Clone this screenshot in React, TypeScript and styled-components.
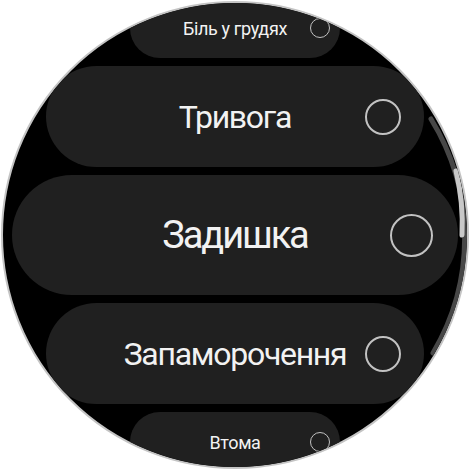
import React from "react";
import styled, { createGlobalStyle } from "styled-components";

type Size = "sm" | "md" | "lg";

const sizes: Record<
    Size,
    {
        width: number;
        height: number;
        font: number;
        tracking: number;
        radio: number;
        ring: number;
        pad: number;
    }
> = {
    sm: { width: 210, height: 60, font: 18, tracking: -0.02, radio: 20, ring: 1.5, pad: 10 },
    md: { width: 378, height: 101, font: 32, tracking: -0.04, radio: 36, ring: 2, pad: 23 },
    lg: { width: 446, height: 120, font: 38, tracking: -0.055, radio: 43, ring: 2, pad: 25 },
};

const symptoms: { label: string; size: Size }[] = [
    { label: "Біль у грудях", size: "sm" },
    { label: "Тривога", size: "md" },
    { label: "Задишка", size: "lg" },
    { label: "Запаморочення", size: "md" },
    { label: "Втома", size: "sm" },
];

export default function App() {
    return (
        <>
            <GlobalStyle />
            <Face>
                {symptoms.map((item) => (
                    <Pill key={item.label} size={item.size}>
                        <Label size={item.size}>{item.label}</Label>
                        <Radio size={item.size} />
                    </Pill>
                ))}
                <ScrollIndicator viewBox="0 0 466 466" width={466} height={466}>
                    {/* track and thumb follow the bezel edge */}
                    <path
                        d="M 428 116 A 226 226 0 0 1 430 350"
                        stroke="#474747"
                        strokeWidth={5}
                        strokeLinecap="round"
                        fill="none"
                    />
                    <path
                        d="M 453 168 A 226 226 0 0 1 459 232"
                        stroke="#c8c8c8"
                        strokeWidth={5}
                        strokeLinecap="round"
                        fill="none"
                    />
                </ScrollIndicator>
            </Face>
        </>
    );
}

const GlobalStyle = createGlobalStyle`
    html, body {
        margin: 0;
        padding: 0;
        background: #fff;
    }

    body {
        font-family: Roboto, "Noto Sans", sans-serif;
    }
`;

const Face = styled.div`
    position: relative;
    box-sizing: border-box;
    width: 468px;
    height: 468px;
    margin: 1px;
    border-radius: 50%;
    border: 2px solid #c4c4c4;
    background: #000;
    overflow: hidden;
    display: flex;
    flex-direction: column;
    align-items: center;
    justify-content: center;
    gap: 8px;
`;

const Pill = styled.div<{ size: Size }>`
    flex-shrink: 0;
    box-sizing: border-box;
    width: ${(p) => sizes[p.size].width}px;
    height: ${(p) => sizes[p.size].height}px;
    padding: 0 ${(p) => sizes[p.size].pad}px;
    border-radius: 999px;
    background: #202020;
    display: grid;
    grid-template-columns: 1fr auto 1fr;
    align-items: center;
`;

const Label = styled.span<{ size: Size }>`
    grid-column: 2;
    color: #f2f2f2;
    font-size: ${(p) => sizes[p.size].font}px;
    letter-spacing: ${(p) => sizes[p.size].tracking}em;
    white-space: nowrap;
`;

const Radio = styled.span<{ size: Size }>`
    grid-column: 3;
    justify-self: end;
    box-sizing: border-box;
    width: ${(p) => sizes[p.size].radio}px;
    height: ${(p) => sizes[p.size].radio}px;
    border-radius: 50%;
    border: ${(p) => sizes[p.size].ring}px solid #c2c2c2;
`;

const ScrollIndicator = styled.svg`
    position: absolute;
    top: 0;
    left: 0;
    pointer-events: none;
`;
